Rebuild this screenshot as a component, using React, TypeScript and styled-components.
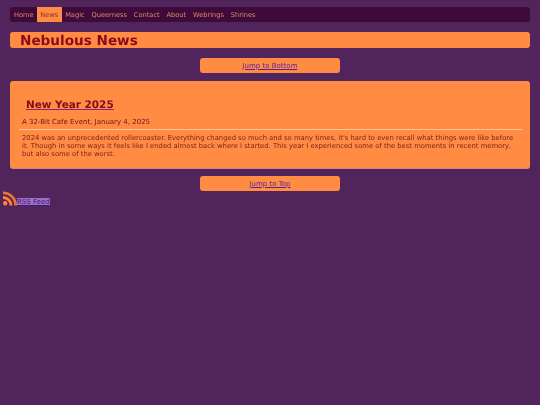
import styled, { createGlobalStyle } from "styled-components";

const GlobalStyle = createGlobalStyle`
  html, body {
    margin: 0;
    padding: 0;
    background-color: #52245c;
    font-family: "DejaVu Sans", Verdana, sans-serif;
    font-size: 7px;
    text-rendering: geometricPrecision;
    color: #7a1020;
  }
`;

const Page = styled.div`
  display: flex;
  flex-direction: column;
  padding-top: 7px;
  filter: blur(0.3px);
`;

const Nav = styled.nav`
  display: flex;
  height: 15px;
  margin: 0 10px;
  padding-left: 0.5px;
  background-color: #3d0a3a;
  border-radius: 3px;
`;

const NavItem = styled.a<{ $active?: boolean }>`
  display: flex;
  align-items: center;
  padding: 0 3.4px;
  font-size: 6.67px;
  color: ${(p) => (p.$active ? "#8a2a30" : "#e08a66")};
  background-color: ${(p) => (p.$active ? "#ff8c42" : "transparent")};
`;

const TitleBar = styled.header`
  display: flex;
  align-items: center;
  height: 16px;
  margin: 10px 10px 0;
  padding-left: 10px;
  background-color: #ff8c42;
  border-radius: 3px;
`;

const Title = styled.h1`
  margin: 1px 0 0;
  font-size: 13.6px;
  font-weight: bold;
  color: #8b0a1a;
`;

const JumpBar = styled.div<{ $top: number }>`
  display: flex;
  align-items: center;
  justify-content: center;
  align-self: center;
  width: 140px;
  height: 15px;
  margin-top: ${(p) => p.$top}px;
  background-color: #ff8c42;
  border-radius: 3px;
  font-size: 7px;
`;

const JumpLink = styled.a`
  color: #5a1fa0;
  text-decoration: underline;
`;

const Card = styled.article`
  display: flex;
  flex-direction: column;
  height: 88px;
  box-sizing: border-box;
  margin: 8px 10px 0;
  padding: 18px 8px 0 12px;
  background-color: #ff8c42;
  border-radius: 3px;
  border-bottom: 1px solid #d9808a;
`;

const PostTitle = styled.h2`
  align-self: flex-start;
  margin: 0 0 0 4px;
  font-size: 10.45px;
  font-weight: bold;
  color: #8b0a1a;
  text-decoration: underline;
  text-decoration-color: #7a2a80;
  text-decoration-thickness: 1.4px;
`;

const Byline = styled.p`
  margin: 6px 0 0;
  line-height: 10px;
  font-size: 7px;
  color: #6a1420;
`;

const Rule = styled.hr`
  margin: 2px 0 0 -3px;
  border: 0;
  border-top: 1px solid #ffc49a;
`;

const Body = styled.p`
  margin: 4px 6px 0 0;
  line-height: 8px;
  font-size: 6.8px;
  color: #7a1e20;
`;

const Feed = styled.div`
  display: flex;
  align-items: flex-end;
  margin: 0 0 0 3px;
`;

const FeedLink = styled.a`
  height: 8px;
  line-height: 8px;
  font-size: 7px;
  color: #3a1a80;
  background-color: #a070c0;
  text-decoration: underline;
`;

const RssIcon = () => (
  <svg width="14" height="15" viewBox="0 0 14 14" fill="none">
    <circle cx="2.2" cy="11.8" r="2.2" fill="#ff8433" />
    <path d="M0 6a8 8 0 0 1 8 8" stroke="#ff8433" strokeWidth="2.8" />
    <path d="M0 1.4a12.6 12.6 0 0 1 12.6 12.6" stroke="#e8762e" strokeWidth="2.8" />
  </svg>
);

const navItems = ["Home", "News", "Magic", "Queerness", "Contact", "About", "Webrings", "Shrines"];

export default function App() {
  return (
    <>
      <GlobalStyle />
      <Page>
        <Nav>
          {navItems.map((item) => (
            <NavItem key={item} $active={item === "News"}>
              {item}
            </NavItem>
          ))}
        </Nav>
        <TitleBar>
          <Title>Nebulous News</Title>
        </TitleBar>
        <JumpBar $top={10}>
          <JumpLink href="#bottom">Jump to Bottom</JumpLink>
        </JumpBar>
        <Card>
          <PostTitle>New Year 2025</PostTitle>
          <Byline>A 32-Bit Cafe Event, January 4, 2025</Byline>
          <Rule />
          <Body>
            2024 was an unprecedented rollercoaster. Everything changed so much and so many times, it's hard to even
            recall what things were like before it. Though in some ways it feels like I ended almost back where I
            started. This year I experienced some of the best moments in recent memory, but also some of the worst.
          </Body>
        </Card>
        <JumpBar $top={7}>
          <JumpLink href="#top">Jump to Top</JumpLink>
        </JumpBar>
        <Feed>
          <RssIcon />
          <FeedLink href="#rss">RSS Feed</FeedLink>
        </Feed>
      </Page>
    </>
  );
}
